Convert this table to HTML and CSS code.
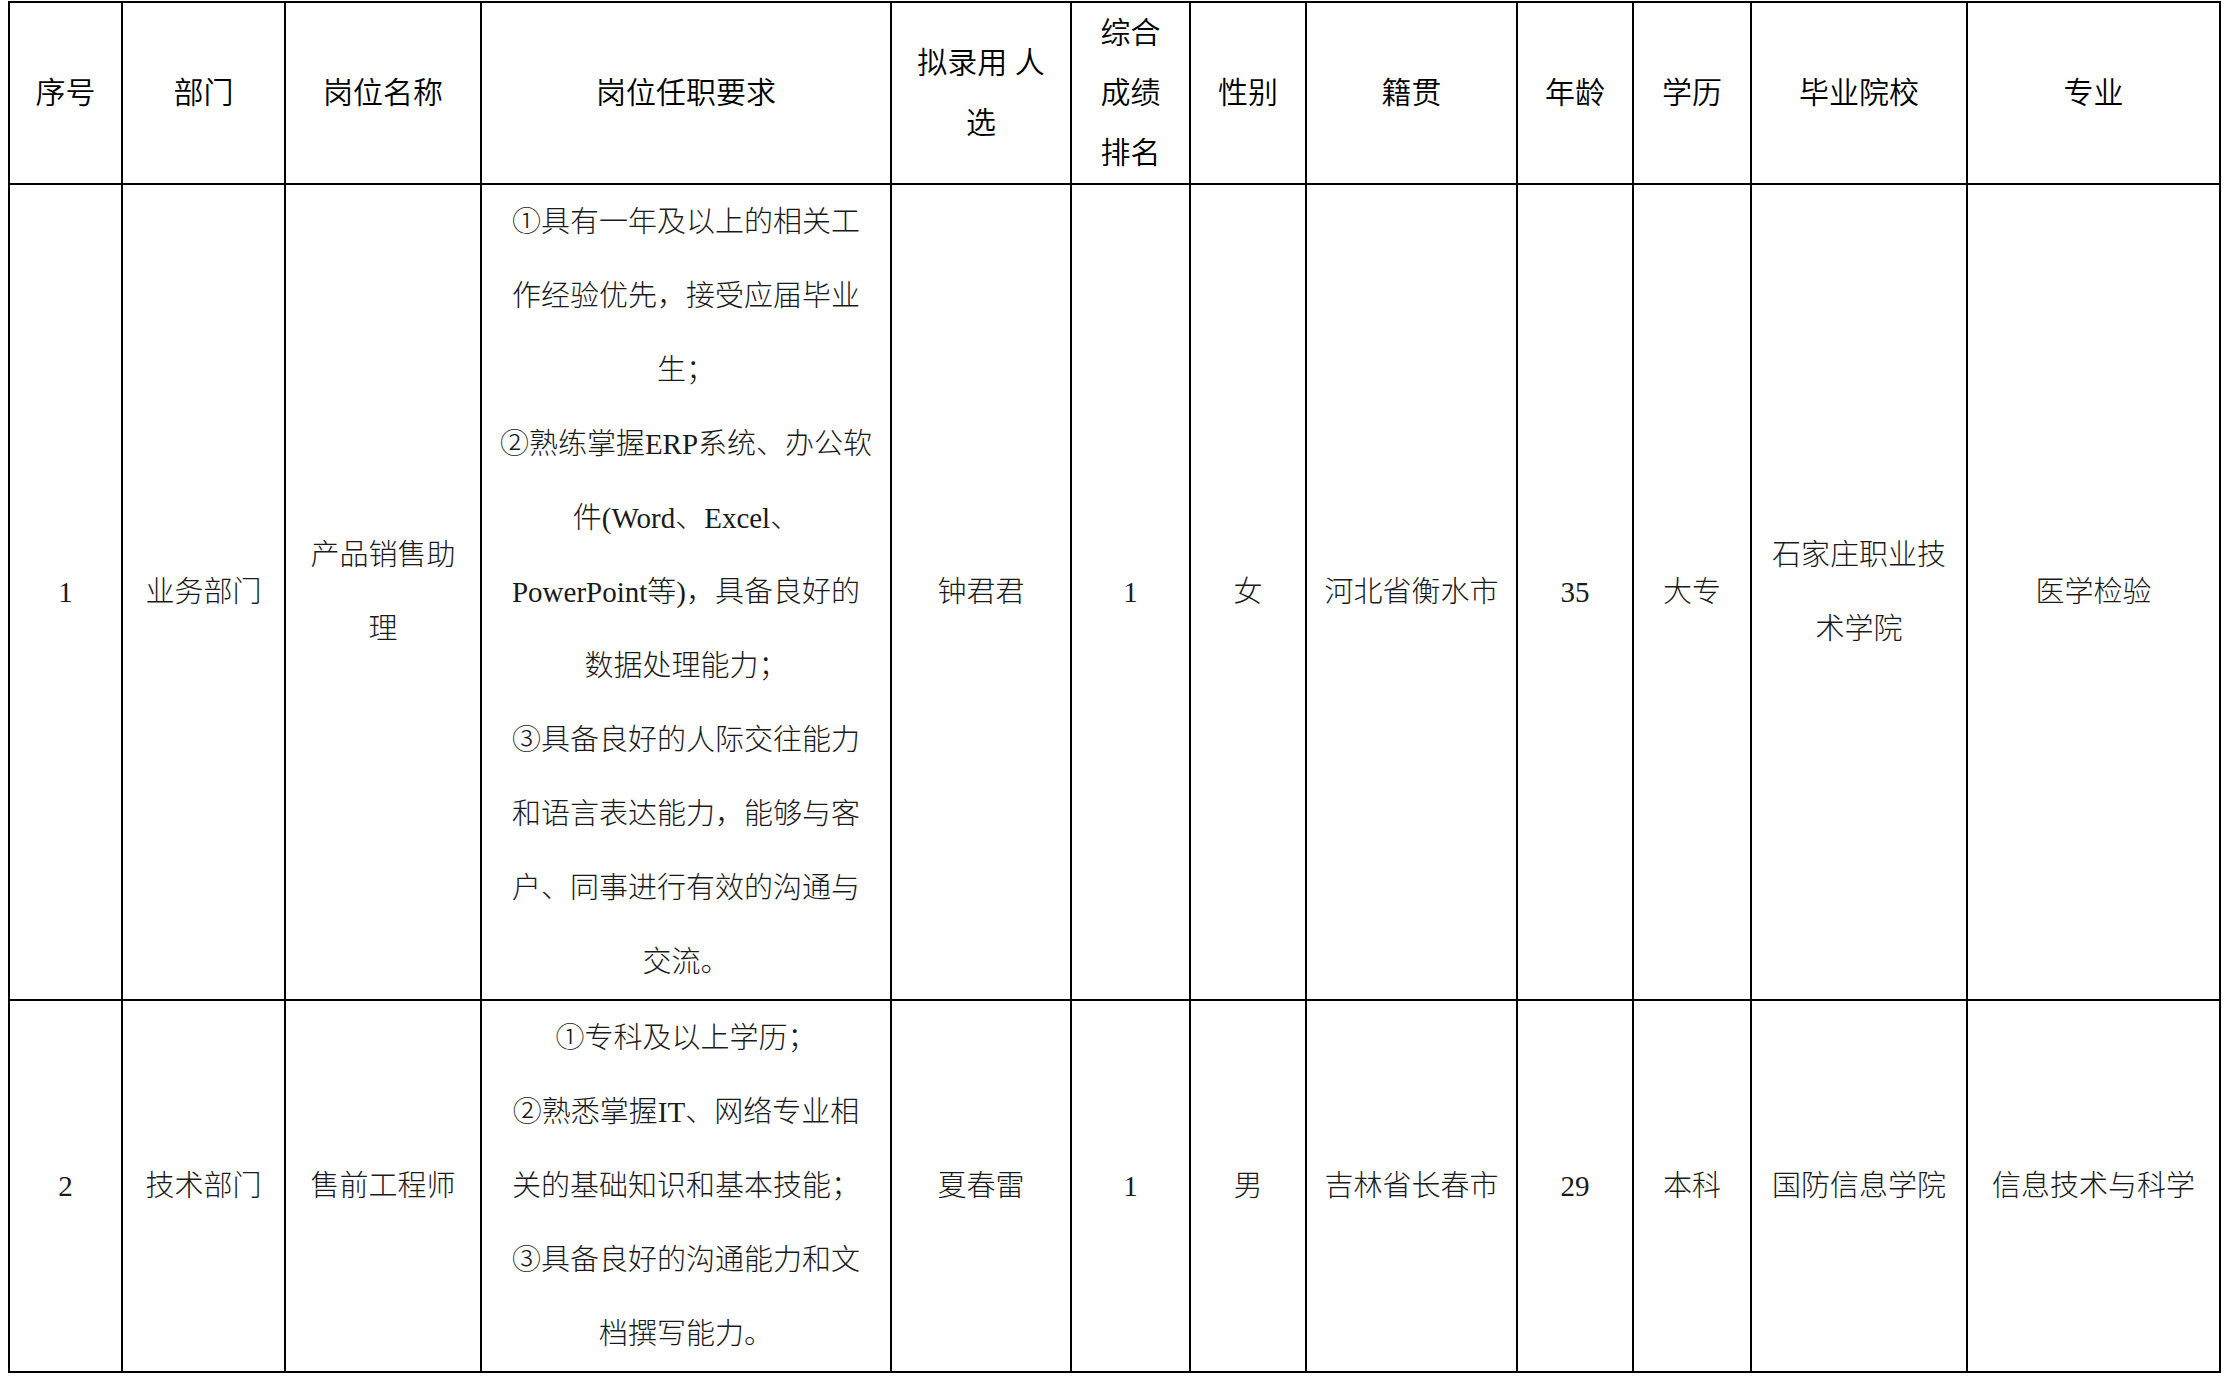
FILE: index.html
```html
<!DOCTYPE html>
<html lang="zh-CN">
<head>
<meta charset="utf-8">
<title>拟录用人员名单</title>
<link rel="stylesheet" href="styles.css">
</head>
<body>
<table class="roster">
  <colgroup>
    <col class="c-no">
    <col class="c-dept">
    <col class="c-post">
    <col class="c-req">
    <col class="c-name">
    <col class="c-rank">
    <col class="c-sex">
    <col class="c-home">
    <col class="c-age">
    <col class="c-edu">
    <col class="c-school">
    <col class="c-major">
  </colgroup>
  <thead>
    <tr class="head-row">
      <th>序号</th>
      <th>部门</th>
      <th>岗位名称</th>
      <th>岗位任职要求</th>
      <th>拟录用 人<br>选</th>
      <th>综合<br>成绩<br>排名</th>
      <th>性别</th>
      <th>籍贯</th>
      <th>年龄</th>
      <th>学历</th>
      <th>毕业院校</th>
      <th>专业</th>
    </tr>
  </thead>
  <tbody>
    <tr class="row-1">
      <td>1</td>
      <td>业务部门</td>
      <td>产品销售助<br>理</td>
      <td class="req">①具有一年及以上的相关工<br>作经验优先，接受应届毕业<br>生；<br>②熟练掌握ERP系统、办公软<br>件(Word、Excel、<br>PowerPoint等)，具备良好的<br>数据处理能力；<br>③具备良好的人际交往能力<br>和语言表达能力，能够与客<br>户、同事进行有效的沟通与<br>交流。</td>
      <td>钟君君</td>
      <td>1</td>
      <td>女</td>
      <td>河北省衡水市</td>
      <td>35</td>
      <td>大专</td>
      <td>石家庄职业技<br>术学院</td>
      <td>医学检验</td>
    </tr>
    <tr class="row-2">
      <td>2</td>
      <td>技术部门</td>
      <td>售前工程师</td>
      <td class="req">①专科及以上学历；<br>②熟悉掌握IT、网络专业相<br>关的基础知识和基本技能；<br>③具备良好的沟通能力和文<br>档撰写能力。</td>
      <td>夏春雷</td>
      <td>1</td>
      <td>男</td>
      <td>吉林省长春市</td>
      <td>29</td>
      <td>本科</td>
      <td>国防信息学院</td>
      <td>信息技术与科学</td>
    </tr>
  </tbody>
</table>
</body>
</html>
```
FILE: styles.css
```css
html, body {
  margin: 0;
  padding: 0;
  background: #ffffff;
}

body {
  padding: 1px 0 0 8px;
  color: #000000;
  font-family: "Liberation Serif", "Noto Sans CJK SC", serif;
}

.roster {
  border-collapse: collapse;
  table-layout: fixed;
  width: 2211px;
}

.c-no { width: 113px; }
.c-dept { width: 163px; }
.c-post { width: 196px; }
.c-req { width: 410px; }
.c-name { width: 180px; }
.c-rank { width: 119px; }
.c-sex { width: 116px; }
.c-home { width: 211px; }
.c-age { width: 116px; }
.c-edu { width: 118px; }
.c-school { width: 216px; }
.c-major { width: 253px; }

.roster th,
.roster td {
  border: 2px solid #000000;
  padding: 0;
  text-align: center;
  vertical-align: middle;
  white-space: nowrap;
  overflow: hidden;
}

.roster th {
  font-size: 30px;
  font-weight: 350;
  line-height: 60px;
  color: #000000;
}

.roster td {
  font-size: 29px;
  font-weight: 300;
  line-height: 74px;
  color: #1a1a1a;
}

.head-row { height: 179px; }
.row-1 { height: 814px; }
.row-2 { height: 369px; }
```
